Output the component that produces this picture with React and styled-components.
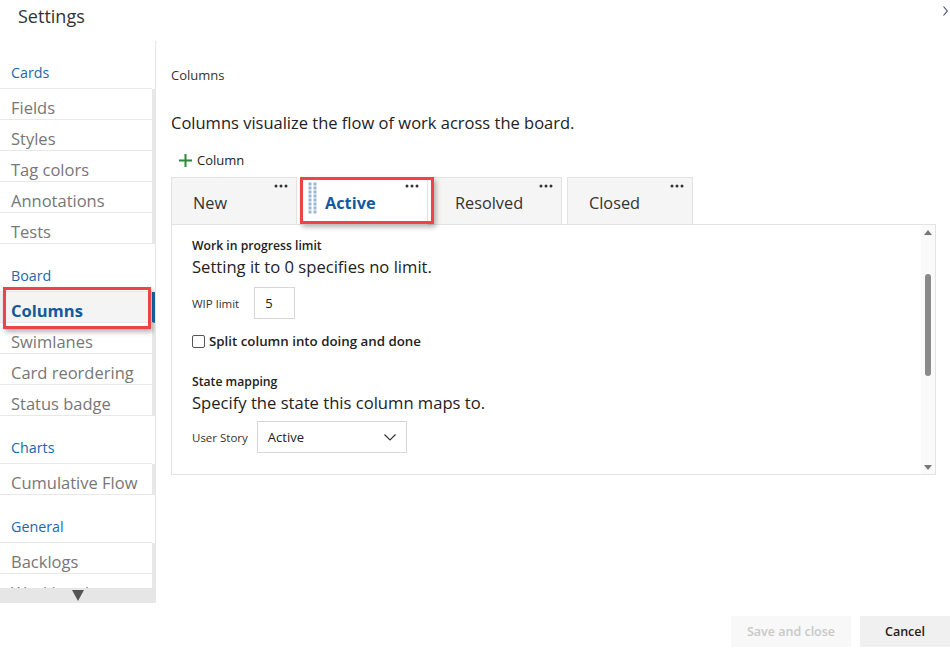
import React, { useState } from "react";
import styled, { createGlobalStyle } from "styled-components";

const GlobalStyle = createGlobalStyle`
  html, body {
    margin: 0;
    padding: 0;
    background: #fff;
  }
  body {
    font-family: "Segoe UI", "Open Sans", sans-serif;
    color: #333;
  }
`;

const Dialog = styled("div")`
  width: 950px;
  height: 658px;
  display: flex;
  flex-direction: column;
  overflow: hidden;
  background: #fff;
`;

const Header = styled("div")`
  height: 41px;
  display: flex;
  align-items: flex-start;
  justify-content: space-between;
  flex-shrink: 0;
`;

const Title = styled("div")`
  font-size: 18px;
  line-height: 24px;
  padding: 4px 0 0 18px;
  color: #333;
`;

const CloseBtn = styled("div")`
  padding: 6px 2px 0 0;
  display: flex;
`;

const Body = styled("div")`
  flex: 1;
  display: flex;
  min-height: 0;
`;

const Nav = styled("div")`
  width: 155px;
  height: 562px;
  border-right: 1px solid #e6e6e6;
  display: flex;
  flex-direction: column;
  position: relative;
  flex-shrink: 0;
`;

const NavScroll = styled("div")`
  flex: 1;
  overflow: hidden;
`;

const NavHeader = styled("div")`
  height: 48px;
  box-sizing: border-box;
  padding: 22px 0 0 11px;
  font-size: 14.3px;
  line-height: 20px;
  color: #1c68b0;
  border-bottom: 1px solid #e8e8e8;
  margin-right: 3px;
`;

const NavItem = styled("div")`
  position: relative;
  height: 31px;
  box-sizing: border-box;
  padding: 8px 0 0 11px;
  font-size: 16.5px;
  line-height: 22px;
  white-space: nowrap;
  color: ${(p) => (p.$active ? "#135a9c" : "#777")};
  font-weight: ${(p) => (p.$active ? 700 : 400)};
  background: ${(p) => (p.$active ? "#f4f4f4" : "#fff")};
  border-bottom: 1px solid #e8e8e8;
  border-right: 3px solid ${(p) => (p.$active ? "#1c68b0" : "#e8e8e8")};

  ${(p) =>
    p.$marked &&
    `
    &::after {
      content: "";
      position: absolute;
      z-index: 2;
      left: 3px;
      right: 1px;
      top: -5px;
      bottom: -7px;
      border: 3px solid #ee4349;
      box-shadow: 2px 3px 5px rgba(0, 0, 0, 0.3);
      pointer-events: none;
    }
  `}
`;

const NavFooter = styled("div")`
  position: absolute;
  left: 0;
  right: 0;
  bottom: 0;
  height: 15px;
  background: #e6e6e6;
  display: flex;
  justify-content: center;
  align-items: center;
  z-index: 3;
`;

const Main = styled("div")`
  flex: 1;
  padding: 24px 14px 0 15px;
  display: flex;
  flex-direction: column;
  min-width: 0;
`;

const Crumb = styled("div")`
  font-size: 13px;
  line-height: 20px;
  color: #333;
`;

const Lead = styled("div")`
  font-size: 16.5px;
  line-height: 24px;
  color: #222;
  margin-top: 26px;
`;

const AddBtn = styled("div")`
  display: flex;
  align-items: center;
  gap: 5px;
  margin: 15px 0 0 8px;
  font-size: 13px;
  line-height: 20px;
  color: #222;
`;

const Tabs = styled("div")`
  display: flex;
  gap: 5px;
  margin-top: 7px;
  height: 48px;
`;

const Tab = styled("div")`
  position: relative;
  width: ${(p) => p.$w}px;
  box-sizing: border-box;
  height: 48px;
  padding: 14px 0 0 ${(p) => (p.$active ? "22px" : "21px")};
  font-size: 16.3px;
  line-height: 22px;
  background: ${(p) => (p.$active ? "#fff" : "#f5f5f5")};
  border: 1px solid #e3e3e3;
  border-bottom: ${(p) => (p.$active ? "1px solid #fff" : "1px solid #e3e3e3")};
  color: ${(p) => (p.$active ? "#135a9c" : "#333")};
  font-weight: ${(p) => (p.$active ? 700 : 400)};
  z-index: ${(p) => (p.$marked ? 2 : 1)};

  ${(p) =>
    p.$marked &&
    `
    &::after {
      content: "";
      position: absolute;
      left: -3px;
      right: -7px;
      top: -1px;
      bottom: 0px;
      border: 3px solid #ee4349;
      box-shadow: 2px 3px 5px rgba(0, 0, 0, 0.3);
      pointer-events: none;
    }
  `}
`;

const TabMenu = styled("svg")`
  position: absolute;
  top: 6px;
  right: 8px;
`;

const Grip = styled("svg")`
  position: absolute;
  left: 5px;
  top: 4px;
`;

const Panel = styled("div")`
  height: 251px;
  border: 1px solid #e3e3e3;
  margin-top: -1px;
  display: flex;
  box-sizing: border-box;
`;

const PanelBody = styled("div")`
  flex: 1;
  padding: 12px 0 0 20px;
`;

const Label = styled("div")`
  font-size: 12.2px;
  line-height: 18px;
  font-weight: 600;
  color: #222;
`;

const Hint = styled("div")`
  font-size: 16.6px;
  line-height: 23px;
  color: #222;
`;

const Field = styled("div")`
  display: flex;
  align-items: center;
  gap: ${(p) => p.$gap};
  margin-top: ${(p) => p.$top};
`;

const FieldLabel = styled("div")`
  font-size: 11.5px;
  color: #333;
`;

const Input = styled("div")`
  width: 41px;
  height: 32px;
  box-sizing: border-box;
  border: 1px solid #d6d6d6;
  padding: 6px 10px;
  font-size: 13px;
  line-height: 18px;
  color: #222;
`;

const Check = styled("label")`
  display: flex;
  align-items: center;
  gap: 4px;
  margin-top: 13px;
  font-size: 13.3px;
  font-weight: 600;
  color: #222;
`;

const Box = styled("span")`
  width: 11px;
  height: 11px;
  border: 1px solid #555;
  border-radius: 2px;
  background: #fff;
`;

const Section = styled("div")`
  margin-top: 23px;
`;

const Select = styled("div")`
  width: 150px;
  height: 32px;
  box-sizing: border-box;
  border: 1px solid #d6d6d6;
  padding: 0 10px;
  display: flex;
  align-items: center;
  justify-content: space-between;
  font-size: 13px;
  color: #222;
`;

const ScrollBar = styled("div")`
  width: 14px;
  background: #fafafa;
  display: flex;
  flex-direction: column;
  align-items: center;
  padding: 5px 0 4px;
  box-sizing: border-box;
`;

const Thumb = styled("div")`
  width: 6px;
  height: 102px;
  border-radius: 3px;
  background: #8a8a8a;
  margin-top: 39px;
`;

const Spacer = styled("div")`
  flex: 1;
`;

const Footer = styled("div")`
  height: 56px;
  flex-shrink: 0;
  box-sizing: border-box;
  padding-top: 14px;
  display: flex;
  justify-content: flex-end;
  align-items: flex-start;
  gap: 9px;
`;

const Button = styled("button")`
  height: 31px;
  width: ${(p) => p.$w};
  border: none;
  font-family: inherit;
  font-size: 12.5px;
  font-weight: 600;
  background: ${(p) => (p.disabled ? "#f8f8f8" : "#f0f0f0")};
  color: ${(p) => (p.disabled ? "#c8c8c8" : "#222")};
`;

const groups = [
  { title: "Cards", items: ["Fields", "Styles", "Tag colors", "Annotations", "Tests"] },
  { title: "Board", items: ["Columns", "Swimlanes", "Card reordering", "Status badge"] },
  { title: "Charts", items: ["Cumulative Flow"] },
  { title: "General", items: ["Backlogs", "Working days"] },
];

const columns = [
  { name: "New", w: 126 },
  { name: "Active", w: 126 },
  { name: "Resolved", w: 129 },
  { name: "Closed", w: 126 },
];

const GripIcon = () => (
  <Grip width="10" height="33" viewBox="0 0 10 33">
    {[0, 1, 2, 3, 4, 5, 6, 7].map((r) =>
      [0, 1].map((c) => (
        <rect
          key={`${r}-${c}`}
          x={c * 5 + 0.5}
          y={r * 4 + 0.5}
          width="3"
          height="3"
          fill="#9ab7d6"
        />
      ))
    )}
  </Grip>
);

const Dots = () => (
  <TabMenu width="14" height="4" viewBox="0 0 14 4">
    <circle cx="2" cy="2" r="1.5" fill="#333" />
    <circle cx="7" cy="2" r="1.5" fill="#333" />
    <circle cx="12" cy="2" r="1.5" fill="#333" />
  </TabMenu>
);

const App = () => {
  const [current] = useState("Columns");
  const [tab] = useState("Active");

  return (
    <Dialog>
      <GlobalStyle />
      <Header>
        <Title>Settings</Title>
        <CloseBtn>
          <svg width="5" height="10" viewBox="0 0 5 10">
            <path d="M0.5 0.5 L4.3 5 L0.5 9.5" stroke="#34466b" strokeWidth="1.1" fill="none" />
          </svg>
        </CloseBtn>
      </Header>
      <Body>
        <Nav>
          <NavScroll>
            {groups.map((g) => (
              <div key={g.title}>
                <NavHeader>{g.title}</NavHeader>
                {g.items.map((it) => (
                  <NavItem key={it} $active={it === current} $marked={it === current}>
                    {it}
                  </NavItem>
                ))}
              </div>
            ))}
          </NavScroll>
          <NavFooter>
            <svg width="12" height="11" viewBox="0 0 12 11">
              <path d="M0 0 H12 L6 11 Z" fill="#555" />
            </svg>
          </NavFooter>
        </Nav>
        <Main>
          <Crumb>Columns</Crumb>
          <Lead>Columns visualize the flow of work across the board.</Lead>
          <AddBtn>
            <svg width="13" height="13" viewBox="0 0 13 13">
              <path d="M6.5 0 V13 M0 6.5 H13" stroke="#2b8a3e" strokeWidth="2" />
            </svg>
            Column
          </AddBtn>
          <Tabs>
            {columns.map((c) => (
              <Tab key={c.name} $w={c.w} $active={c.name === tab} $marked={c.name === tab}>
                {c.name === tab && <GripIcon />}
                {c.name}
                <Dots />
              </Tab>
            ))}
          </Tabs>
          <Panel>
            <PanelBody>
              <Label>Work in progress limit</Label>
              <Hint>Setting it to 0 specifies no limit.</Hint>
              <Field $top="9px" $gap="15px">
                <FieldLabel>WIP limit</FieldLabel>
                <Input>5</Input>
              </Field>
              <Check>
                <Box />
                Split column into doing and done
              </Check>
              <Section>
                <Label>State mapping</Label>
                <Hint>Specify the state this column maps to.</Hint>
                <Field $top="7px" $gap="9px">
                  <FieldLabel>User Story</FieldLabel>
                  <Select>
                    Active
                    <svg width="12" height="7" viewBox="0 0 12 7">
                      <path d="M0.5 0.5 L6 6 L11.5 0.5" stroke="#333" strokeWidth="1.2" fill="none" />
                    </svg>
                  </Select>
                </Field>
              </Section>
            </PanelBody>
            <ScrollBar>
              <svg width="8" height="5" viewBox="0 0 8 5">
                <path d="M0 5 L4 0 L8 5 Z" fill="#777" />
              </svg>
              <Thumb />
              <Spacer />
              <svg width="8" height="5" viewBox="0 0 8 5">
                <path d="M0 0 L8 0 L4 5 Z" fill="#777" />
              </svg>
            </ScrollBar>
          </Panel>
        </Main>
      </Body>
      <Footer>
        <Button disabled $w="120px">Save and close</Button>
        <Button $w="90px">Cancel</Button>
      </Footer>
    </Dialog>
  );
};

export default App;
